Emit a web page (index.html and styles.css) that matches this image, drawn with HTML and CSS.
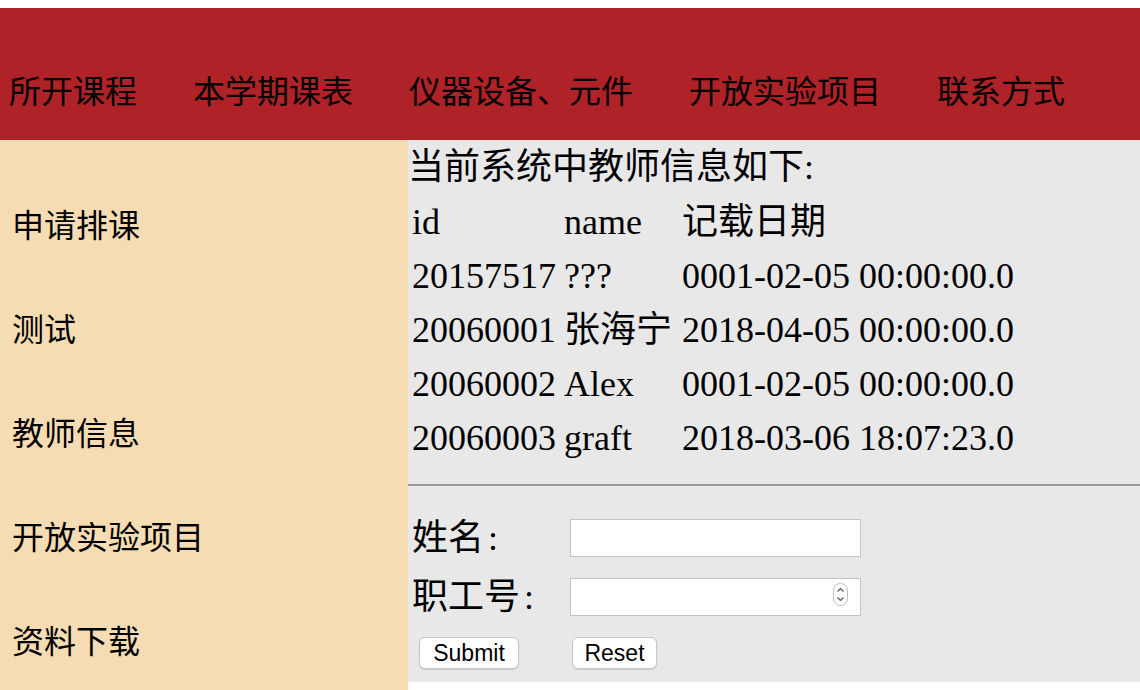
FILE: index.html
```html
<!DOCTYPE html>
<html lang="zh">
<head>
<meta charset="utf-8">
<title>教师信息</title>
<link rel="stylesheet" href="styles.css">
</head>
<body>
<header class="topbar">
  <ul class="nav">
    <li>所开课程</li>
    <li>本学期课表</li>
    <li>仪器设备、元件</li>
    <li>开放实验项目</li>
    <li>联系方式</li>
  </ul>
</header>
<div class="layout">
  <aside class="sidebar">
    <ul class="side-list">
      <li>申请排课</li>
      <li>测试</li>
      <li>教师信息</li>
      <li>开放实验项目</li>
      <li>资料下载</li>
    </ul>
  </aside>
  <main class="main">
    <h2 class="title">当前系统中教师信息如下:</h2>
    <div class="table">
      <div class="cell">id</div><div class="cell">name</div><div class="cell">记载日期</div>
      <div class="cell">20157517</div><div class="cell">???</div><div class="cell">0001-02-05 00:00:00.0</div>
      <div class="cell">20060001</div><div class="cell">张海宁</div><div class="cell">2018-04-05 00:00:00.0</div>
      <div class="cell">20060002</div><div class="cell">Alex</div><div class="cell">0001-02-05 00:00:00.0</div>
      <div class="cell">20060003</div><div class="cell">graft</div><div class="cell">2018-03-06 18:07:23.0</div>
    </div>
    <hr class="rule">
    <form class="form">
      <label class="label" for="name">姓名<span class="colon">:</span></label>
      <input class="field" id="name" type="text">
      <label class="label" for="num">职工号<span class="colon">:</span></label>
      <div class="num-wrap">
        <input class="field" id="num" type="number">
        <span class="spinner">
          <svg width="15" height="23" viewBox="0 0 15 23">
            <rect x="0.5" y="0.5" width="14" height="22" rx="7" ry="7" fill="#fff" stroke="#bdbdbd"/>
            <path d="M4.5 8.5 L7.5 5.5 L10.5 8.5" fill="none" stroke="#555" stroke-width="1.2"/>
            <path d="M4.5 14.5 L7.5 17.5 L10.5 14.5" fill="none" stroke="#555" stroke-width="1.2"/>
          </svg>
        </span>
      </div>
      <button class="btn btn-submit" type="button">Submit</button>
      <button class="btn btn-reset" type="reset">Reset</button>
    </form>
  </main>
</div>
</body>
</html>
```
FILE: styles.css
```css
* { box-sizing: border-box; }
html, body { margin: 0; padding: 0; background: #fff; }
body {
  padding-top: 8px;
  font-family: "Liberation Serif", "Noto Sans CJK SC", serif;
  color: #000;
}
.topbar {
  background: #ae2228;
  height: 132px;
  padding-top: 36px;
}
.nav {
  list-style: none;
  margin: 0;
  padding: 0 0 0 9px;
  display: flex;
  gap: 56px;
  font-size: 32px;
  line-height: 96px;
}
.nav li { white-space: nowrap; }
.layout {
  display: flex;
  align-items: flex-start;
}
.sidebar {
  width: 408px;
  flex: 0 0 408px;
  min-height: 560px;
  background: #f5dcb3;
}
.side-list {
  list-style: none;
  margin: 0;
  padding: 34px 0 0 12px;
  font-size: 32px;
}
.side-list li {
  height: 104px;
  line-height: 104px;
}
.main {
  flex: 1;
  background: #e8e8e8;
  padding: 5px 0 13px 0;
}
.title {
  margin: 0;
  font-size: 36px;
  font-weight: normal;
  line-height: 44px;
}
.table {
  margin: 6px 0 0 4px;
  display: grid;
  grid-template-columns: 152px 118px auto;
  font-size: 36px;
}
.cell {
  height: 54px;
  line-height: 54px;
  white-space: nowrap;
}
.rule {
  margin: 19px 0 0 0;
  height: 0;
  border: 0;
  border-top: 2px solid #9a9a9a;
  border-bottom: 1px solid #efefef;
}
.form {
  margin: 32px 0 0 4px;
  display: grid;
  grid-template-columns: 158px 291px;
  grid-auto-rows: auto;
  row-gap: 21px;
  align-items: center;
}
.label {
  font-size: 36px;
  line-height: 38px;
  white-space: nowrap;
}
.colon { margin-left: 4px; }
.field {
  width: 291px;
  height: 38px;
  margin: 0;
  border: 1px solid #c3c3c3;
  background: #fff;
  font-size: 18px;
  padding: 0 6px;
  -moz-appearance: textfield;
  appearance: textfield;
}
.field::-webkit-inner-spin-button,
.field::-webkit-outer-spin-button {
  -webkit-appearance: none;
  margin: 0;
}
.num-wrap {
  position: relative;
  width: 291px;
  height: 38px;
}
.spinner {
  position: absolute;
  left: 263px;
  top: 5px;
  width: 15px;
  height: 23px;
  display: block;
  line-height: 0;
}
.btn {
  height: 32px;
  margin: 0;
  padding: 0;
  background: #fff;
  border: 1px solid #c6c6c6;
  border-radius: 6px;
  box-shadow: 0 1px 1px rgba(0, 0, 0, 0.12);
  font-family: "Liberation Sans", Arial, sans-serif;
  font-size: 23px;
  color: #000;
  justify-self: start;
}
.btn-submit { width: 100px; margin-left: 7px; }
.btn-reset { width: 85px; margin-left: 2px; }
```
